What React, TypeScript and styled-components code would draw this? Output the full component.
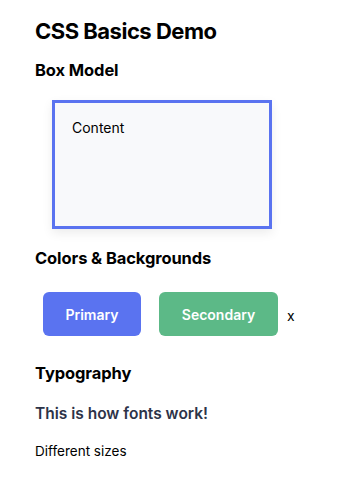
import React from "react";
import styled, { createGlobalStyle } from "styled-components";

const Global = createGlobalStyle`
  html, body { margin: 0; padding: 0; background: #ffffff; }
  body { font-family: Inter, "Noto Sans", "Liberation Sans", sans-serif; color: #000; }
`;

const Page = styled.div`
  padding: 16px 35px;
  display: flex;
  flex-direction: column;
`;

const Title = styled.h1`
  margin: 0;
  font-size: 22px;
  line-height: 30px;
  font-weight: 700;
  letter-spacing: -0.5px;
`;

const SectionTitle = styled.h2<{ $top: number }>`
  margin: ${(p) => p.$top}px 0 0;
  font-size: 16.5px;
  line-height: 22px;
  font-weight: 700;
  letter-spacing: -0.1px;
`;

const Box = styled.div`
  margin: 19px 0 0 17px;
  width: 220px;
  height: 129px;
  box-sizing: border-box;
  border: 3px solid #5a73f0;
  background: #f8f9fb;
  padding: 15px 17px;
  box-shadow: 0 4px 10px rgba(0, 0, 0, 0.08);
  font-size: 14px;
  line-height: 20px;
`;

const ButtonRow = styled.div`
  margin-top: 23px;
  padding-left: 8px;
  display: flex;
  align-items: center;
`;

const Button = styled.button<{ $bg: string; $w: number }>`
  width: ${(p) => p.$w}px;
  height: 44px;
  margin-right: 18px;
  border: none;
  border-radius: 6px;
  background: ${(p) => p.$bg};
  color: #ffffff;
  font-family: inherit;
  font-size: 14px;
  font-weight: 600;
  padding: 0;
`;

const Extra = styled.span`
  margin-left: -9px;
  font-size: 14px;
  line-height: 20px;
  padding-top: 4px;
`;

const Lead = styled.p`
  margin: 19px 0 0;
  font-size: 15.5px;
  line-height: 22px;
  font-weight: 600;
  color: #2d3348;
`;

const Small = styled.p`
  margin: 16px 0 0;
  font-size: 13.5px;
  line-height: 20px;
`;

export default function App() {
  return (
    <>
      <Global />
      <Page>
        <Title>CSS Basics Demo</Title>
        <SectionTitle $top={13}>Box Model</SectionTitle>
        <Box>Content</Box>
        <SectionTitle $top={18}>Colors &amp; Backgrounds</SectionTitle>
        <ButtonRow>
          <Button $bg="#5a73f0" $w={98}>Primary</Button>
          <Button $bg="#5cb987" $w={119}>Secondary</Button>
          <Extra>x</Extra>
        </ButtonRow>
        <SectionTitle $top={26}>Typography</SectionTitle>
        <Lead>This is how fonts work!</Lead>
        <Small>Different sizes</Small>
      </Page>
    </>
  );
}
